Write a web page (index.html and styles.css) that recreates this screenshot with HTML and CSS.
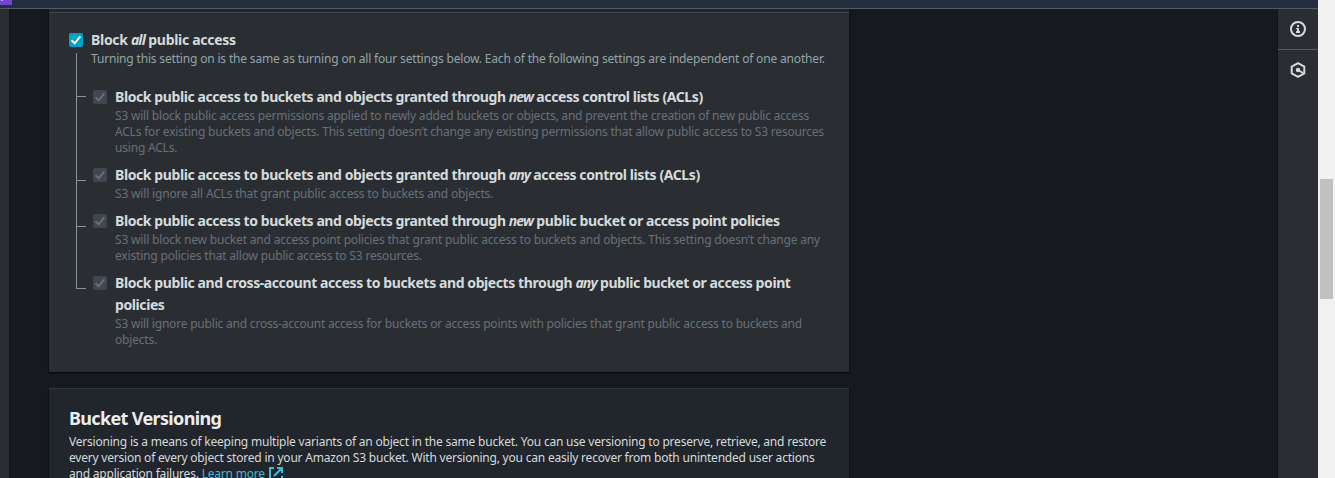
FILE: index.html
```
<!DOCTYPE html>
<html lang="en">
<head>
<meta charset="utf-8">
<title>Block Public Access settings</title>
<link rel="stylesheet" href="styles.css">
</head>
<body>
<div class="page">
  <div class="app">
    <header class="topbar"><svg class="service" width="12" height="5" viewBox="0 0 12 5"><path fill="#7545cf" d="M0 0h12v5H0z"/><path fill="#b89bed" d="M1 0h2v1H1z"/></svg></header>
    <div class="body">
      <nav class="leftbar"></nav>
      <main class="content">
        <section class="card access">
          <div class="card-head"></div>
          <div class="option root">
            <span class="check on"><svg viewBox="0 0 14 14"><path d="M2.5 7.2l3.2 3.1 5.6-6.9"/></svg></span>
            <div class="text">
              <h3 class="root-title">Block <em>all</em> public access</h3>
              <p class="lead">Turning this setting on is the same as turning on all four settings below. Each of the following settings are independent of one another.</p>
            </div>
          </div>
          <div class="children">
            <div class="option first">
              <span class="check"><svg viewBox="0 0 14 14"><path d="M2.5 7.2l3.2 3.1 5.6-6.9"/></svg></span>
              <div class="text">
                <h3>Block public access to buckets and objects granted through <em>new</em> access control lists (ACLs)</h3>
                <p>S3 will block public access permissions applied to newly added buckets or objects, and prevent the creation of new public access<br>ACLs for existing buckets and objects. This setting doesn’t change any existing permissions that allow public access to S3 resources<br>using ACLs.</p>
              </div>
            </div>
            <div class="option">
              <span class="check"><svg viewBox="0 0 14 14"><path d="M2.5 7.2l3.2 3.1 5.6-6.9"/></svg></span>
              <div class="text">
                <h3>Block public access to buckets and objects granted through <em>any</em> access control lists (ACLs)</h3>
                <p class="loose">S3 will ignore all ACLs that grant public access to buckets and objects.</p>
              </div>
            </div>
            <div class="option">
              <span class="check"><svg viewBox="0 0 14 14"><path d="M2.5 7.2l3.2 3.1 5.6-6.9"/></svg></span>
              <div class="text">
                <h3>Block public access to buckets and objects granted through <em>new</em> public bucket or access point policies</h3>
                <p class="loose">S3 will block new bucket and access point policies that grant public access to buckets and objects. This setting doesn’t change any<br>existing policies that allow public access to S3 resources.</p>
              </div>
            </div>
            <div class="option">
              <span class="check"><svg viewBox="0 0 14 14"><path d="M2.5 7.2l3.2 3.1 5.6-6.9"/></svg></span>
              <div class="text">
                <h3>Block public and cross-account access to buckets and objects through <em>any</em> public bucket or access point<br>policies</h3>
                <p>S3 will ignore public and cross-account access for buckets or access points with policies that grant public access to buckets and<br>objects.</p>
              </div>
            </div>
          </div>
        </section>
        <section class="card versioning">
          <h2>Bucket Versioning</h2>
          <p>Versioning is a means of keeping multiple variants of an object in the same bucket. You can use versioning to preserve, retrieve, and restore<br>every version of every object stored in your Amazon S3 bucket. With versioning, you can easily recover from both unintended user actions<br>and application failures. <a>Learn more <svg class="ext" viewBox="0 0 14 14"><path d="M5 1H1v12h12V9M8 1h5v5M13 1L5 9"/></svg></a></p>
        </section>
      </main>
      <aside class="rightbar">
        <div class="tool"><svg viewBox="0 0 16 16"><circle cx="8" cy="8" r="7" fill="none" stroke="#d5dbdb" stroke-width="2"/><path fill="#d5dbdb" d="M7 4h2v2H7zM6 7h3v3h1v2H6v-2h1V8H6z"/></svg></div>
        <div class="tool"><svg viewBox="0 0 16 16"><path fill="none" stroke="#d5dbdb" stroke-width="2" stroke-linejoin="round" d="M8 1.2l6.3 3.4v6.8l-6.3 3.4-6.3-3.4V4.6z"/><circle cx="8" cy="8" r="2.2" fill="#d5dbdb"/><path stroke="#d5dbdb" stroke-width="2" d="M8 8l5 3"/></svg></div>
      </aside>
    </div>
  </div>
  <div class="scrollbar"><div class="thumb"></div></div>
</div>
</body>
</html>
```
FILE: styles.css
```
* { box-sizing: border-box; }
body { margin: 0; font-family: "Noto Sans", sans-serif; background: #16191f; }
h2, h3, p { margin: 0; white-space: nowrap; }
.page { display: flex; height: 478px; overflow: hidden; }
.app { flex: 1; display: flex; flex-direction: column; }
.topbar { height: 9px; background: #232f3e; border-bottom: 1px solid #545b64; }
.service { display: block; }
.body { flex: 1; display: flex; min-height: 0; }
.leftbar { width: 9px; background: #2a2e33; }
.content { flex: 1; padding-left: 40px; box-shadow: inset 1px 0 0 #111317, inset -1px 0 0 #111317; }
.card { width: 800px; box-shadow: 0 1px 1px #0b0c0f, 1px 1px 1px #111317, -1px 1px 1px #111317; }
.access { height: 363px; background: #2a2e33; }
.card-head { height: 4px; background: #21252c; border-bottom: 1px solid #414750; }
.option { display: flex; position: relative; }
.root { padding: 16px 0 0 20px; }
.check { flex: none; width: 14px; height: 14px; margin-top: 4px; border-radius: 2px; background: #414750; color: #687078; }
.check svg { display: block; fill: none; stroke: currentColor; stroke-width: 2; }
.on { background: #00a1c9; color: #fff; }
.text { padding-left: 8px; }
.children { position: relative; display: flex; flex-direction: column; gap: 8px; padding: 19px 0 0 44px; }
.children::before { content: ""; position: absolute; left: 27px; top: -14px; width: 1px; height: 236px; background: #879596; }
.children .option::before { content: ""; position: absolute; left: -16px; top: 16px; width: 9px; height: 1px; background: #879596; }
.children .first::before { top: 10px; }
h3 { font-size: 14px; line-height: 22px; font-weight: 700; color: #d5dbdb; letter-spacing: -0.41px; }
h3 em { letter-spacing: -0.9px; }
.root-title { letter-spacing: -0.3px; }
.access p { font-size: 12px; line-height: 16px; color: #687078; letter-spacing: -0.2px; }
.access .lead { color: #95a5a6; letter-spacing: -0.172px; }
.access .loose { letter-spacing: -0.175px; }
.versioning { height: 120px; margin-top: 16px; padding: 18px 20px 0; background: #21252c; border-top: 1px solid #30353a; }
h2 { font-size: 18px; line-height: 22px; color: #eaeded; letter-spacing: -0.65px; }
.versioning p { margin-top: 5px; font-size: 12px; line-height: 16px; color: #d5dbdb; letter-spacing: -0.21px; }
.versioning a { color: #44b9d6; }
.ext { width: 14px; height: 14px; margin-left: 1px; vertical-align: -3px; fill: none; stroke: currentColor; stroke-width: 2; }
.rightbar { width: 40px; background: #2a2e33; }
.tool { height: 41px; display: flex; align-items: center; justify-content: center; border-bottom: 1px solid #545b64; }
.tool + .tool { height: 40px; border-bottom: 0; }
.tool svg { width: 16px; height: 16px; }
.scrollbar { width: 17px; padding: 179px 2px 0; background: #f1f1f1; }
.thumb { height: 120px; background: #c1c1c1; }
```
